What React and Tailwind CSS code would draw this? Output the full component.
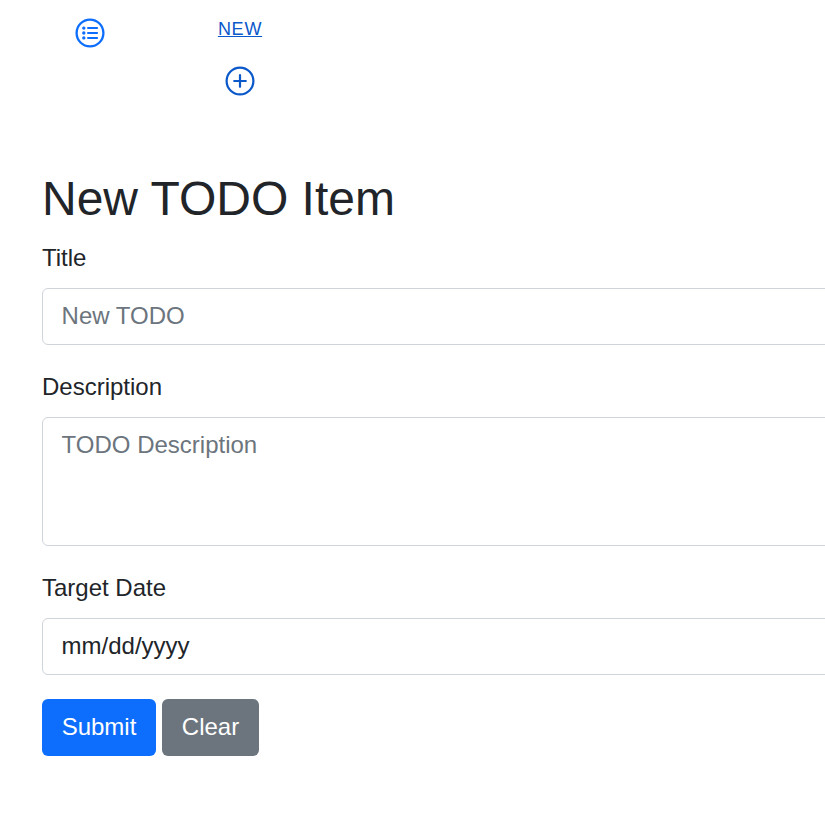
const ListIcon = () => (
  <svg width="30" height="30" viewBox="0 0 30 30" fill="none" stroke="currentColor" strokeLinecap="round">
    <circle cx="15" cy="15" r="13.4" strokeWidth="2.3" />
    <path d="M13 10.1h9.1M13 15h9.1M13 19.9h9.1" strokeWidth="2" />
    <path d="M8.8 10.1h.01M8.8 15h.01M8.8 19.9h.01" strokeWidth="3.4" />
  </svg>
);

const PlusIcon = () => (
  <svg className="mt-[26px] shrink-0" width="30" height="30" viewBox="0 0 30 30" fill="none" stroke="currentColor" strokeLinecap="round">
    <circle cx="15" cy="15" r="13.4" strokeWidth="2.2" />
    <path d="M9.2 15h11.6M15 9.2v11.6" strokeWidth="2.2" />
  </svg>
);

const field = 'block w-full rounded-md border border-[#ced4da] bg-white pl-[18.6px] pr-[19px] text-2xl leading-9 placeholder:text-[#6c757d] placeholder:opacity-100';

export default function App() {
  return (
    <div className="h-[825px] w-full overflow-hidden bg-white font-['Liberation_Sans',Arial,sans-serif] text-2xl leading-9 text-[#212529]">
      <nav className="flex h-[169px] pl-[75px] pt-[18px]">
        <a className="h-[30px] w-[30px] text-[#0d6efd]"><ListIcon /></a>
        <a className="ml-[113px] flex w-[44px] flex-col items-center text-[#0a58ca]">
          <span className="text-lg leading-[22px] tracking-[0.75px] underline">NEW</span>
          <PlusIcon />
        </a>
      </nav>
      <main className="w-[900px] pl-[42px]">
        <h1 className="mb-[11px] text-5xl leading-[60px]">New TODO Item</h1>
        <label className="mb-3 block">Title</label>
        <input className={field + ' h-[57px] pb-0.5'} placeholder="New TODO" />
        <label className="mb-3 mt-6 block">Description</label>
        <textarea className={field + ' h-[129px] resize-none py-[9px]'} placeholder="TODO Description" />
        <label className="mb-3 mt-6 block">Target Date</label>
        <input className={field + ' h-[57px] pb-0.5'} defaultValue="mm/dd/yyyy" />
        <div className="mt-6 flex gap-1.5">
          <button className="h-[57px] w-[114px] rounded-md bg-[#0d6efd] pb-0.5 text-white">Submit</button>
          <button className="h-[57px] w-[97px] rounded-md bg-[#6c757d] pb-0.5 text-white">Clear</button>
        </div>
      </main>
    </div>
  );
}
